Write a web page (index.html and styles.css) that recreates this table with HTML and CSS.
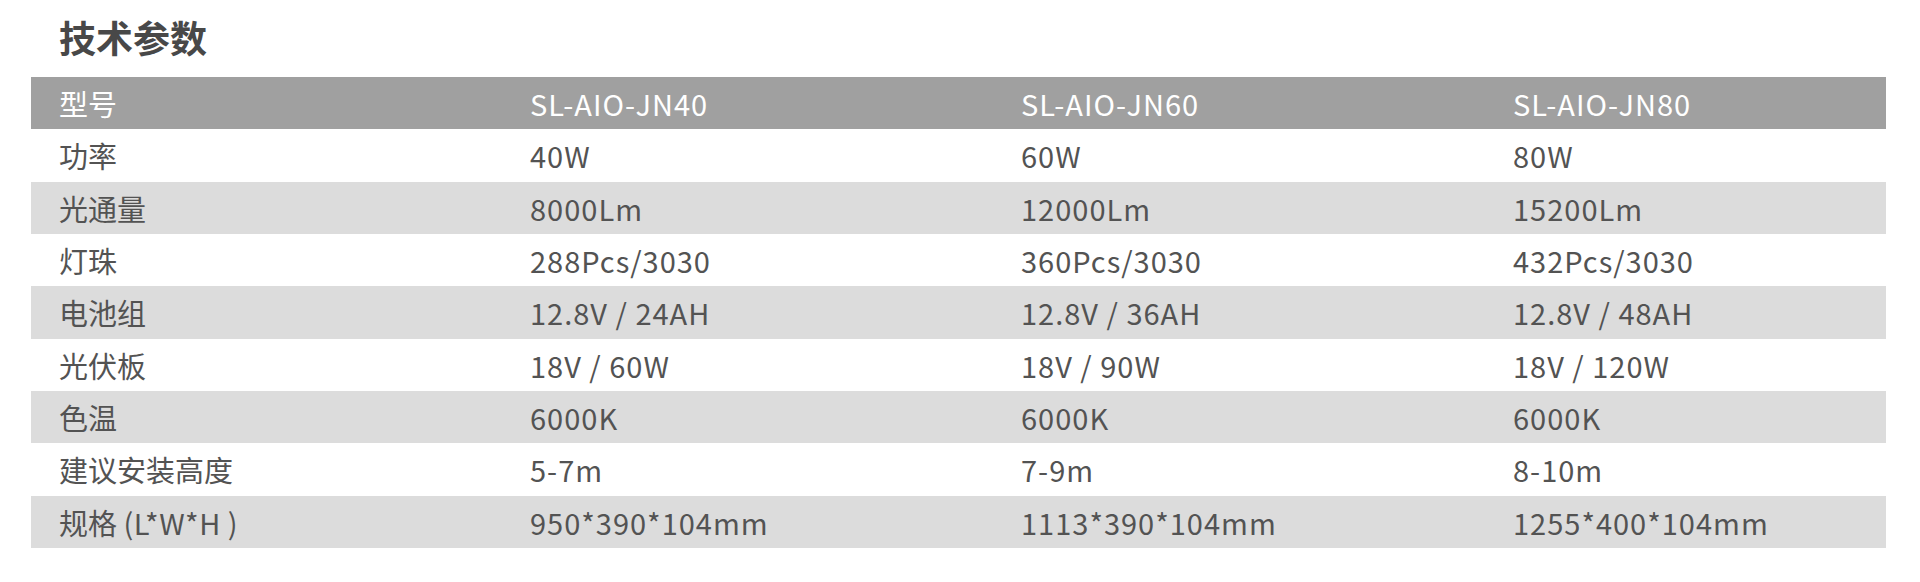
FILE: index.html
```html
<!DOCTYPE html>
<html lang="zh-CN">
<head>
<meta charset="utf-8">
<title>技术参数</title>
<link rel="stylesheet" href="styles.css">
</head>
<body>
<section class="specs">
  <h2 class="specs-title">技术参数</h2>
  <div class="spec-table">
    <div class="row head"><div class="cell label">型号</div><div class="cell">SL-AIO-JN40</div><div class="cell">SL-AIO-JN60</div><div class="cell">SL-AIO-JN80</div></div>
    <div class="row"><div class="cell label">功率</div><div class="cell">40W</div><div class="cell">60W</div><div class="cell">80W</div></div>
    <div class="row alt"><div class="cell label">光通量</div><div class="cell">8000Lm</div><div class="cell">12000Lm</div><div class="cell">15200Lm</div></div>
    <div class="row"><div class="cell label">灯珠</div><div class="cell">288Pcs/3030</div><div class="cell">360Pcs/3030</div><div class="cell">432Pcs/3030</div></div>
    <div class="row alt"><div class="cell label">电池组</div><div class="cell">12.8V / 24AH</div><div class="cell">12.8V / 36AH</div><div class="cell">12.8V / 48AH</div></div>
    <div class="row"><div class="cell label">光伏板</div><div class="cell">18V / 60W</div><div class="cell">18V / 90W</div><div class="cell">18V / 120W</div></div>
    <div class="row alt"><div class="cell label">色温</div><div class="cell">6000K</div><div class="cell">6000K</div><div class="cell">6000K</div></div>
    <div class="row"><div class="cell label">建议安装高度</div><div class="cell">5-7m</div><div class="cell">7-9m</div><div class="cell">8-10m</div></div>
    <div class="row alt"><div class="cell label">规格 <span class="dim">(L*W*H )</span></div><div class="cell">950*390*104mm</div><div class="cell">1113*390*104mm</div><div class="cell">1255*400*104mm</div></div>
  </div>
</section>
</body>
</html>
```
FILE: styles.css
```css
html, body {
  margin: 0;
  padding: 0;
  background: #ffffff;
}
body {
  font-family: "Noto Sans CJK SC", "Noto Sans", sans-serif;
  color: #535353;
}
.specs {
  padding: 0 34px 0 31px;
}
.specs-title {
  margin: 0;
  height: 77px;
  box-sizing: border-box;
  padding: 15px 0 0 28px;
  font-size: 37px;
  line-height: 45px;
  font-weight: 700;
  color: #484848;
}
.spec-table {
  display: flex;
  flex-direction: column;
}
.row {
  display: grid;
  grid-template-columns: 471px 491px 492px 1fr;
  height: 52.33px;
  align-items: center;
  background: #ffffff;
}
.row.alt {
  background: #dcdcdc;
}
.row.head {
  background: #a0a0a0;
  color: #ffffff;
}
.cell {
  padding-left: 28px;
  font-size: 29px;
  line-height: 34px;
  letter-spacing: 1px;
  white-space: nowrap;
}
.cell.label {
  letter-spacing: 0;
}
.cell.label .dim {
  letter-spacing: 0.5px;
}
```
